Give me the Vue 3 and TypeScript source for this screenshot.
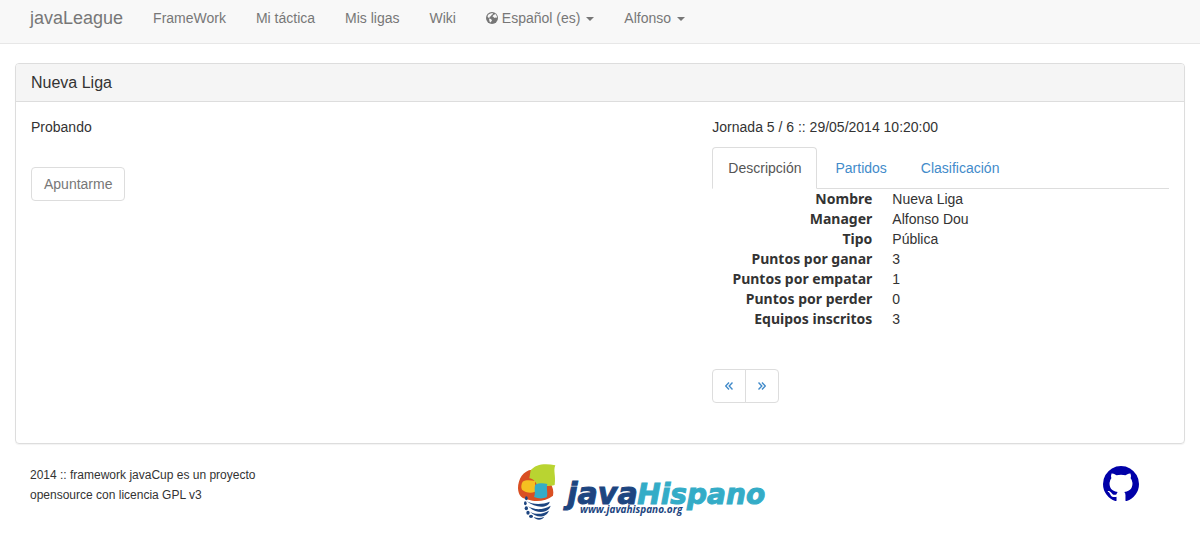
<script setup lang="ts">
import { ref } from 'vue'

interface Detail {
  label: string
  value: string
}

const links: string[] = ['FrameWork', 'Mi táctica', 'Mis ligas', 'Wiki']
const tabs: string[] = ['Descripción', 'Partidos', 'Clasificación']
const activeTab = ref<string>('Descripción')

const details: Detail[] = [
  { label: 'Nombre', value: 'Nueva Liga' },
  { label: 'Manager', value: 'Alfonso Dou' },
  { label: 'Tipo', value: 'Pública' },
  { label: 'Puntos por ganar', value: '3' },
  { label: 'Puntos por empatar', value: '1' },
  { label: 'Puntos por perder', value: '0' },
  { label: 'Equipos inscritos', value: '3' },
]
</script>

<template>
  <div class="page">
    <nav class="navbar">
      <a class="brand" href="#">javaLeague</a>
      <a v-for="link in links" :key="link" class="nav-link" href="#">{{ link }}</a>
      <button class="nav-link" type="button">
        <svg class="globe" viewBox="0 0 24 24" aria-hidden="true">
          <circle cx="12" cy="12" r="12" fill="#777" />
          <path
            d="M9 3l4-1 1 2-3 2-1 2-3 2 0 2-3-1-1-3 2-3zM15 6l4-2 3 5-1 3-2-1-2 1-2-2-2-1zM6 13l4 1 2 3-3 4-2-2z"
            fill="#f8f8f8"
          />
        </svg>
        Español (es)
        <span class="caret"></span>
      </button>
      <button class="nav-link" type="button">Alfonso <span class="caret"></span></button>
    </nav>

    <main class="panel">
      <h1 class="panel-heading">Nueva Liga</h1>
      <div class="panel-body">
        <section class="intro">
          <p>Probando</p>
          <button class="join" type="button">Apuntarme</button>
        </section>
        <section class="league">
          <p>Jornada 5 / 6 :: 29/05/2014 10:20:00</p>
          <div class="tabs" role="tablist">
            <button
              v-for="tab in tabs"
              :key="tab"
              class="tab"
              :class="{ active: tab === activeTab }"
              type="button"
              role="tab"
              :aria-selected="tab === activeTab"
              @click="activeTab = tab"
            >
              {{ tab }}
            </button>
          </div>
          <dl class="details">
            <template v-for="item in details" :key="item.label">
              <dt>{{ item.label }}</dt>
              <dd>{{ item.value }}</dd>
            </template>
          </dl>
          <div class="pager">
            <a href="#" aria-label="Anterior">
              <svg viewBox="0 0 8 8" aria-hidden="true"><path d="M4 .5L.7 4 4 7.5M7.5 .5L4.2 4l3.300 3.500" /></svg>
            </a>
            <a href="#" aria-label="Siguiente">
              <svg viewBox="0 0 8 8" aria-hidden="true"><path d="M.5 .5L3.800 4 .5 7.500M4 .5L7.300 4 4 7.500" /></svg>
            </a>
          </div>
        </section>
      </div>
    </main>

    <footer class="footer">
      <p class="legal">2014 :: framework javaCup es un proyecto<br />opensource con licencia GPL v3</p>
      <a class="sponsor" href="#" aria-label="javaHispano">
        <svg viewBox="24 24 753 171" aria-hidden="true">
          <path d="M66 44C40 46 24 72 24 100C25 122 36 132 56 134C78 142 110 138 129 122C132 108 128 96 122 86L72 62Z" fill="#d94f22" />
          <path d="M62 46C76 28 104 24 136 31C129 48 138 60 134 90C118 94 104 92 84 98C79 82 72 72 58 70Z" fill="#b9d431" />
          <path d="M38 80C48 73 64 76 76 78C73 90 79 99 75 110C62 116 46 112 36 104C32 96 34 87 38 80Z" fill="#f5c021" />
          <path d="M76 89C88 83 101 84 112 87C108 100 115 114 110 127C98 132 83 131 72 126C78 112 71 101 76 89Z" fill="#34acc7" />
          <g fill="#1d4580">
            <path d="M50 139C66 148 96 150 119 140C116 160 76 160 50 139Z" />
            <path d="M54 154C74 166 100 165 122 152C116 175 78 178 54 154Z" />
            <path d="M60 170C78 180 98 178 117 167C109 188 80 191 60 170Z" />
            <path d="M71 186C83 190 92 190 103 185C96 197 79 197 71 186Z" />
            <ellipse cx="49" cy="130" rx="4" ry="6" />
            <ellipse cx="46" cy="145" rx="4" ry="6" />
            <ellipse cx="49" cy="160" rx="5" ry="6" />
            <ellipse cx="54" cy="173" rx="5" ry="6" />
            <ellipse cx="63" cy="184" rx="6" ry="5" />
          </g>
          <text class="wordmark java" x="172" y="147">java</text>
          <text class="wordmark hispano" x="382" y="147">Hispano</text>
          <text class="site" x="210" y="175">www.javahispano.org</text>
        </svg>
      </a>
      <a class="github" href="#" aria-label="GitHub">
        <svg viewBox="0 128 1536 1536" aria-hidden="true">
          <path
            d="M768 128q209 0 385.500 103t279.500 279.500 103 385.500q0 251-146.500 451.500t-378.500 277.500q-27 5-40-7t-13-30q0-3 .5-76.500t.5-134.500q0-97-52-142 57-6 102.500-18t94-39 81-66.500 53-105 20.500-150.500q0-119-79-206 37-91-8-204-28-9-81 11t-92 44l-38 24q-93-26-192-26t-192 26q-16-11-42.500-27t-83.500-38.500-85-13.500q-45 113-8 204-79 87-79 206 0 85 20.500 150t52.500 105 80.500 67 94 39 102.500 18q-39 36-49 103-21 10-45 15t-57 5-65.500-21.500-55.500-62.500q-19-32-48.500-52t-49.500-24l-20-3q-21 0-29 4.500t-5 11.500 9 14 13 12l7 5q22 10 43.500 38t31.500 51l10 23q13 38 44 61.500t67 30 69.500 7 55.500-3.500l23-4q0 38 .5 88.500t.5 54.500q0 18-13 30t-40 7q-232-77-378.500-277.500t-146.500-451.500q0-209 103-385.500t279.500-279.500 385.500-103z"
          />
        </svg>
      </a>
    </footer>
  </div>
</template>

<style>
body {
  margin: 0;
  background: #fff;
}
</style>

<style scoped>
.page {
  font: 14px/20px 'Liberation Sans', Arial, sans-serif;
  color: #333;
}
.page *,
.page {
  box-sizing: border-box;
}
a {
  text-decoration: none;
}
button {
  font: inherit;
  cursor: pointer;
}
p {
  margin: 0;
}
.navbar {
  display: flex;
  align-items: center;
  height: 44px;
  padding: 0 15px 7px;
  background: #f8f8f8;
  border-bottom: 1px solid #e7e7e7;
}
.brand,
.nav-link {
  padding: 0 15px;
  color: #777;
  white-space: nowrap;
}
.brand {
  font-size: 18px;
}
.nav-link {
  border: 0;
  background: none;
}
.globe {
  width: 12px;
  height: 12px;
  vertical-align: -1px;
}
.caret {
  display: inline-block;
  margin-left: 2px;
  vertical-align: middle;
  border-top: 4px solid #777;
  border-left: 4px solid transparent;
  border-right: 4px solid transparent;
}
.panel {
  margin: 19px 15px;
  border: 1px solid #ddd;
  border-radius: 4px;
  box-shadow: 0 1px 1px rgba(0, 0, 0, 0.05);
}
.panel-heading {
  margin: 0;
  padding: 10px 15px;
  font-size: 16px;
  line-height: 17px;
  font-weight: 400;
  background: #f5f5f5;
  border-bottom: 1px solid #ddd;
  border-radius: 3px 3px 0 0;
}
.panel-body {
  display: grid;
  grid-template-columns: 7fr 5fr;
  padding: 15px 0 40px;
}
.intro,
.league {
  padding: 0 15px;
}
.join {
  margin-top: 30px;
  padding: 6px 12px;
  color: #777;
  background: #fff;
  border: 1px solid #ddd;
  border-radius: 4px;
}
.tabs {
  display: flex;
  gap: 2px;
  margin-top: 10px;
  border-bottom: 1px solid #ddd;
}
.tab {
  margin-bottom: -1px;
  padding: 10px 15px;
  color: #428bca;
  background: none;
  border: 1px solid transparent;
  border-radius: 4px 4px 0 0;
}
.tab.active {
  color: #555;
  background: #fff;
  border-color: #ddd #ddd #fff;
}
.details {
  display: grid;
  grid-template-columns: 160px 1fr;
  column-gap: 20px;
  margin: 0 0 40px;
}
dt {
  font-family: 'Noto Sans', sans-serif;
  font-weight: 700;
  text-align: right;
}
dd {
  margin: 0;
}
.pager {
  display: flex;
}
.pager a {
  display: flex;
  align-items: center;
  justify-content: center;
  width: 34px;
  height: 34px;
  border: 1px solid #ddd;
  border-radius: 4px 0 0 4px;
}
.pager a + a {
  margin-left: -1px;
  border-radius: 0 4px 4px 0;
}
.pager svg {
  width: 8px;
  height: 8px;
  fill: none;
  stroke: #428bca;
  stroke-width: 1.4;
}
.footer {
  display: grid;
  grid-template-columns: 5fr 6fr 1fr;
  padding: 0 15px;
}
.footer > * {
  padding: 0 15px;
}
.legal {
  margin-top: 2px;
  font-size: 12px;
}
.github {
  margin-top: 3px;
}
.sponsor svg {
  display: block;
  width: 251px;
  height: 57px;
}
.github svg {
  display: block;
  width: 36px;
  height: 36px;
  fill: #0000a8;
}
.wordmark {
  font: italic 700 84px 'DejaVu Sans', sans-serif;
  stroke-width: 3;
}
.java {
  font-size: 90px;
  fill: #1d4580;
  stroke: #1d4580;
}
.hispano {
  fill: #34acc7;
  stroke: #34acc7;
}
.site {
  font: italic 700 30px 'Open Sans', sans-serif;
  fill: #1d4580;
}
</style>
